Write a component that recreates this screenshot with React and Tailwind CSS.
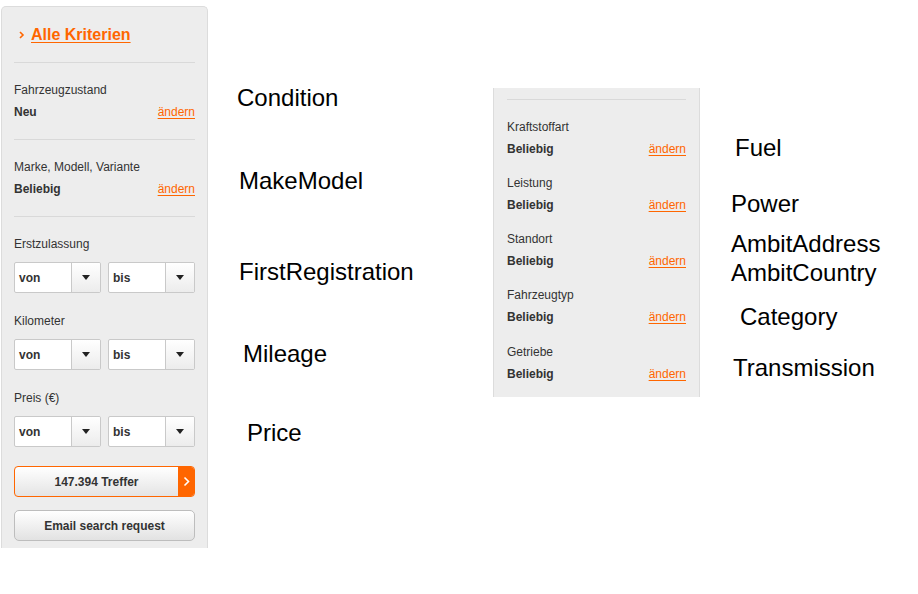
import React from 'react';

const font = { fontFamily: '"Liberation Sans", Arial, Helvetica, sans-serif' };

const Change = () => (
  <a href="#" className="text-[12px] leading-4 text-[#ff6600] underline underline-offset-2">ändern</a>
);

const Criterion = ({ label, value, className = '' }) => (
  <div className={className}>
    <div className="text-[12px] leading-4 text-[#333]">{label}</div>
    <div className="mt-[6px] flex items-center justify-between">
      <span className="text-[12px] leading-4 font-bold text-[#333]">{value}</span>
      <Change />
    </div>
  </div>
);

const Select = ({ value }) => (
  <div className="flex h-[31px] w-[87px] rounded-[2px] border border-[#c9c9c9] bg-white overflow-hidden">
    <div className="flex flex-1 items-center pl-[4px] text-[12px] font-bold text-[#333]">{value}</div>
    <div className="flex w-[29px] items-center justify-center border-l border-[#c9c9c9] bg-gradient-to-b from-white to-[#ececec]">
      <svg width="8" height="5" viewBox="0 0 8 5"><path d="M0 0h8L4 5z" fill="#222" /></svg>
    </div>
  </div>
);

const Range = ({ label, className = '' }) => (
  <div className={className}>
    <div className="text-[12px] leading-4 text-[#333]">{label}</div>
    <div className="mt-[10px] flex justify-between">
      <Select value="von" />
      <Select value="bis" />
    </div>
  </div>
);

const Divider = () => <div className="h-px bg-[#d9d9d9]" />;

const notes = [
  { text: 'Condition', x: 237, y: 98 },
  { text: 'MakeModel', x: 239, y: 181 },
  { text: 'FirstRegistration', x: 239, y: 272 },
  { text: 'Mileage', x: 243, y: 354 },
  { text: 'Price', x: 247, y: 433 },
  { text: 'Fuel', x: 735, y: 148 },
  { text: 'Power', x: 731, y: 204 },
  { text: 'AmbitAddress', x: 731, y: 244 },
  { text: 'AmbitCountry', x: 731, y: 273 },
  { text: 'Category', x: 740, y: 317 },
  { text: 'Transmission', x: 733, y: 368 },
];

export default function App() {
  return (
    <div className="relative h-[594px] w-[918px] overflow-hidden bg-white" style={font}>
      <div className="flex items-start">
        {/* left filter panel */}
        <div className="ml-px mt-[6px] w-[207px] rounded-t-[5px] border border-b-0 border-[#dcdcdc] bg-[#ededed] px-[12px] pb-[7px]">
          <div className="flex items-center pt-[18px] pb-[17px] pl-[5px]">
            <svg width="6" height="8" viewBox="0 0 6 8" className="mr-[6px]">
              <path d="M1 1l3 3-3 3" stroke="#ff6600" strokeWidth="1.6" fill="none" />
            </svg>
            <a href="#" className="text-[16px] leading-5 font-bold text-[#ff6600] underline underline-offset-2">Alle Kriterien</a>
          </div>
          <Divider />
          <Criterion label="Fahrzeugzustand" value="Neu" className="pt-[19px] pb-[19px]" />
          <Divider />
          <Criterion label="Marke, Modell, Variante" value="Beliebig" className="pt-[19px] pb-[19px]" />
          <Divider />
          <Range label="Erstzulassung" className="pt-[19px]" />
          <Range label="Kilometer" className="pt-[20px]" />
          <Range label="Preis (€)" className="pt-[20px]" />
          <button className="mt-[19px] flex h-[31px] w-full overflow-hidden rounded-[4px] border border-[#ff6600] bg-gradient-to-b from-white to-[#e4e4e4]">
            <span className="flex flex-1 items-center justify-center text-[12px] font-bold text-[#333]">147.394 Treffer</span>
            <span className="flex w-[16px] items-center justify-center bg-[#ff6600]">
              <svg width="7" height="11" viewBox="0 0 7 11"><path d="M1.5 1.5l4 4-4 4" stroke="#fff" strokeWidth="1.6" fill="none" /></svg>
            </span>
          </button>
          <button className="mt-[13px] flex h-[31px] w-full items-center justify-center rounded-[5px] border border-[#bdbdbd] bg-gradient-to-b from-white to-[#e2e2e2] text-[12px] font-bold text-[#333]">
            Email search request
          </button>
        </div>

        {/* right filter panel */}
        <div className="ml-[285px] mt-[88px] w-[207px] border-x border-[#dcdcdc] bg-[#ededed] px-[13px] pt-[11px] pb-[15px]">
          <Divider />
          <Criterion label="Kraftstoffart" value="Beliebig" className="pt-[19px]" />
          <Criterion label="Leistung" value="Beliebig" className="pt-[18px]" />
          <Criterion label="Standort" value="Beliebig" className="pt-[18px]" />
          <Criterion label="Fahrzeugtyp" value="Beliebig" className="pt-[18px]" />
          <Criterion label="Getriebe" value="Beliebig" className="pt-[19px]" />
        </div>
      </div>

      {notes.map((n) => (
        <div
          key={n.text}
          className="absolute -translate-y-1/2 text-[24px] leading-none text-black"
          style={{ left: n.x, top: n.y }}
        >
          {n.text}
        </div>
      ))}
    </div>
  );
}
